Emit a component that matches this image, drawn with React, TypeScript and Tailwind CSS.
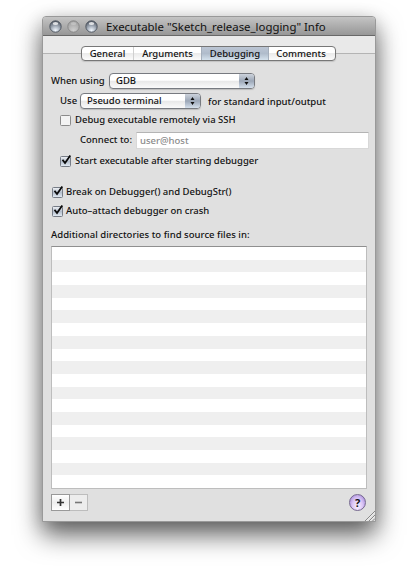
import React from "react";

function Check({ on }: { on?: boolean }) {
  return (
    <svg width="15" height="15" viewBox="0 0 15 15" className="-my-2 -mr-[4px] shrink-0">
      <defs>
        <linearGradient id="chk" x1="0" y1="0" x2="0" y2="1">
          <stop offset="0" stopColor="#f2f4f7" />
          <stop offset=".5" stopColor="#b5bfcd" />
          <stop offset="1" stopColor="#e6eef6" />
        </linearGradient>
      </defs>
      <rect x=".5" y="2.5" width="10" height="10" rx="1" fill={on ? "url(#chk)" : "#f3f3f3"} stroke={on ? "#767c86" : "#8b8b8b"} />
      {on && <path d="M2.5 5.8 L5 9 L10.3 1.4" fill="none" stroke="#0a0a0a" strokeWidth="1.8" />}
    </svg>
  );
}

function Popup({ label, className }: { label: string; className: string }) {
  return (
    <div className={`flex h-[16px] overflow-hidden rounded-[4px] border border-[#777a80] bg-linear-to-b from-white from-45% via-[#e8e8e8] via-50% to-[#fafafa] shadow-[0_1px_1px_#8886] ${className}`}>
      <span className="flex-1 pl-[6px] leading-[14px]">{label}</span>
      <span className="flex w-[15px] items-center justify-center bg-linear-to-b from-[#cdd3dc] via-[#9ca7b7] to-[#d5e0ec]">
        <svg width="5" height="8" viewBox="0 0 5 8" fill="#111">
          <path d="M2.5 0 L4.5 3 H.5Z M2.5 8 L4.5 5 H.5Z" />
        </svg>
      </span>
    </div>
  );
}

function Light({ dim }: { dim?: boolean }) {
  return (
    <svg width="13" height="13" viewBox="0 0 13 13">
      <defs>
        <radialGradient id="lit" cx=".5" cy=".85" r=".8">
          <stop offset="0" stopColor="#f2f8ff" />
          <stop offset=".5" stopColor="#a4adb9" />
          <stop offset="1" stopColor="#555c68" />
        </radialGradient>
        <radialGradient id="dim" cx=".5" cy=".85" r=".8">
          <stop offset="0" stopColor="#cfcfcf" />
          <stop offset="1" stopColor="#a0a0a0" />
        </radialGradient>
      </defs>
      <circle cx="6.5" cy="6.5" r="5.7" fill={dim ? "url(#dim)" : "url(#lit)"} stroke={dim ? "#858585" : "#4c535e"} strokeWidth=".9" />
      <ellipse cx="6.5" cy="3.6" rx="2.7" ry="1.5" fill="#fff" opacity={dim ? 0.25 : 0.75} />
    </svg>
  );
}

export default function App() {
  return (
    <div className="h-[573px] w-[417px] overflow-hidden bg-white pl-[42px] pt-[16px] font-['Noto_Sans','Open_Sans',sans-serif] text-[9.5px] font-medium whitespace-nowrap text-[#111]">
      <div className="relative flex h-[506px] w-[334px] flex-col rounded-t-[4px] border border-[#999] bg-[#e0e0e0] shadow-[0_13px_26px_0px_rgba(0,0,0,0.6),0_4px_18px_0px_rgba(0,0,0,0.15)]">
        <header className="flex h-[19px] shrink-0 items-center rounded-t-[3px] border-b border-[#686868] bg-linear-to-b from-[#c4c4c4] to-[#979797] pl-[6px]">
          <div className="flex gap-[5px]">
            <Light />
            <Light dim />
            <Light />
          </div>
          <h1 className="pt-[2px] pl-[8px] text-[11.4px] leading-[16px] font-normal">Executable "Sketch_release_logging" Info</h1>
        </header>

        <div className="flex h-[37px] shrink-0 items-start bg-[linear-gradient(#e9e9e9_17px,#b4b4b4_17px,#b4b4b4_18px,#e0e0e0_18px)] pt-[10px] pl-[38px]">
          <nav className="flex h-[15px] w-[255px] overflow-hidden rounded-[4px] border border-[#777] bg-linear-to-b from-white from-45% via-[#ebebeb] via-50% to-[#fbfbfb] text-center leading-[14px] shadow-[0_1px_1px_#8885]">
            <span className="w-[52px] border-r border-[#d0d0d0]">General</span>
            <span className="w-[67px]">Arguments</span>
            <span className="w-[68px] border-x border-[#a5afbc] bg-linear-to-b from-[#bcc6d4] via-[#b0bccb] to-[#d5e2ed]">Debugging</span>
            <span className="flex-1 pr-[2px]">Comments</span>
          </nav>
        </div>

        <div className="flex h-[17px] shrink-0 pl-[8px]">
          <span className="w-[58px] leading-[16px]">When using</span>
          <Popup label="GDB" className="w-[146px]" />
        </div>
        <div className="mt-[3px] flex h-[17px] shrink-0 pl-[17px]">
          <span className="w-[20px] leading-[15px]">Use</span>
          <Popup label="Pseudo terminal" className="w-[121px]" />
          <span className="pl-[7px] leading-[17px] tracking-[0.02px]">for standard input/output</span>
        </div>
        <div className="mt-[5px] flex h-[11px] shrink-0 items-center gap-[4px] pl-[17px]">
          <Check />
          <span>Debug executable remotely via SSH</span>
        </div>
        <div className="mt-[6px] flex h-[17px] shrink-0 items-center pl-[37px]">
          <span className="w-[56px]">Connect to:</span>
          <input placeholder="user@host" className="h-[17px] w-[233px] border border-[#d8d8d8] border-t-[#b4b4b4] bg-white pl-[3px] text-[9.5px] outline-none placeholder:text-[#8b8b8b]" />
        </div>
        <div className="mt-[7px] flex h-[11px] shrink-0 items-center gap-[4px] pl-[17px]">
          <Check on />
          <span>Start executable after starting debugger</span>
        </div>
        <div className="mt-[20px] flex h-[11px] shrink-0 items-center gap-[3px] pl-[9px]">
          <Check on />
          <span>Break on Debugger() and DebugStr()</span>
        </div>
        <div className="mt-[8px] flex h-[11px] shrink-0 items-center gap-[3px] pl-[9px]">
          <Check on />
          <span>Auto–attach debugger on crash</span>
        </div>
        <p className="mt-[10px] h-[19px] shrink-0 pl-[8px] leading-[16px] tracking-[0.03px]">Additional directories to find source files in:</p>
        <div className="ml-[8px] flex h-[243px] w-[316px] shrink-0 flex-col border border-[#bdbdbd] border-t-[#8f8f8f]">
          {Array.from({ length: 19 }, (_, i) => (
            <div key={i} className="flex-1 odd:bg-white even:bg-[#efefef]" />
          ))}
        </div>
        <footer className="mt-[5px] flex h-[18px] shrink-0 justify-between pr-[9px] pl-[8px]">
          <div className="flex h-[17px]">
            <span className="flex w-[19px] items-center justify-center border border-[#999] bg-linear-to-b from-white via-[#eee] to-white">
              <svg width="7" height="7" viewBox="0 0 7 7"><path d="M3.5 0V7M0 3.5H7" stroke="#333" strokeWidth="1.7" /></svg>
            </span>
            <span className="flex w-[18px] items-center justify-center border border-l-0 border-[#bdbdbd] bg-[#ededed]">
              <svg width="7" height="7" viewBox="0 0 7 7"><path d="M0 3.5H7" stroke="#777" strokeWidth="1.6" /></svg>
            </span>
          </div>
          <button className="h-[17px] w-[17px] rounded-full border border-[#76688f] bg-radial-[at_50%_75%] from-[#fbf2ff] via-[#d9c4f6] to-[#9678d0] text-[11px] leading-[14px] font-bold">?</button>
        </footer>
        <svg className="absolute right-0 bottom-0" width="10" height="10" viewBox="0 0 10 10">
          <path d="M0 10L10 0M4 10L10 4M7.5 10L10 7.5" stroke="#888" strokeWidth="1" />
          <path d="M1.2 10L10 1.2M5.2 10L10 5.2" stroke="#f5f5f5" strokeWidth=".7" />
        </svg>
      </div>
    </div>
  );
}
